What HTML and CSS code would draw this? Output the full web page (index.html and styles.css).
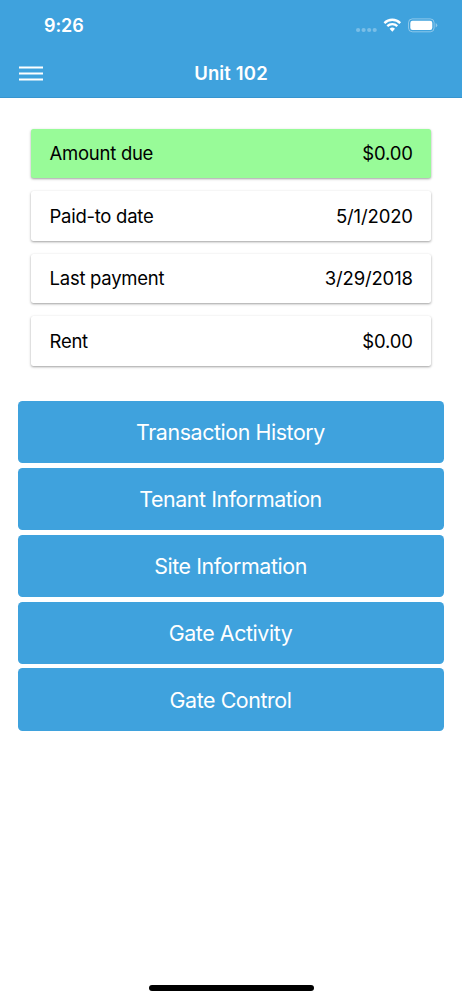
FILE: index.html
```html
<!DOCTYPE html>
<html lang="en">
<head>
<meta charset="utf-8">
<meta name="viewport" content="width=device-width, initial-scale=1">
<title>Unit 102</title>
<link rel="stylesheet" href="styles.css">
</head>
<body>
<div class="screen">
  <header class="header">
    <div class="status">
      <span class="time">9:26</span>
      <svg class="indicators" width="84" height="20" viewBox="0 0 84 20" fill="#fff" aria-hidden="true">
        <g opacity=".3"><circle cx="3.1" cy="15" r="2.1"/><circle cx="8.6" cy="15" r="2.1"/><circle cx="14.2" cy="15" r="2.1"/><circle cx="19.7" cy="15" r="2.1"/></g>
        <g fill="none" stroke="#fff" stroke-width="2.3"><path d="M29.4 8.1a11 11 0 0 1 15.8 0"/><path d="M32.3 11.1a7.1 7.1 0 0 1 10 0"/></g>
        <path d="M34.6 13.7a3.9 3.9 0 0 1 5.4 0L37.3 16.7Z"/>
        <rect x="53.5" y="3.9" width="25.6" height="12.9" rx="3.8" fill="none" stroke="#fff" opacity=".4"/>
        <rect x="55.3" y="5.7" width="22" height="9.3" rx="2.2"/>
        <path d="M80.7 8.1Q82.3 8.8 82.3 10.3T80.7 12.5Z" opacity=".4"/>
      </svg>
    </div>
    <div class="nav">
      <svg class="menu" width="24" height="16" viewBox="0 0 24 16" stroke="#fff" stroke-width="2" aria-label="Menu"><path d="M0 1.6H24M0 7.5H24M0 13.4H24"/></svg>
      <h1 class="title">Unit 102</h1>
    </div>
  </header>
  <main class="content">
    <section class="cards">
      <div class="card due"><span class="label">Amount due</span><span class="value">$0.00</span></div>
      <div class="card"><span class="label">Paid-to date</span><span class="value">5/1/2020</span></div>
      <div class="card"><span class="label">Last payment</span><span class="value">3/29/2018</span></div>
      <div class="card"><span class="label">Rent</span><span class="value">$0.00</span></div>
    </section>
    <nav class="actions">
      <button class="action">Transaction History</button>
      <button class="action">Tenant Information</button>
      <button class="action">Site Information</button>
      <button class="action">Gate Activity</button>
      <button class="action">Gate Control</button>
    </nav>
  </main>
  <div class="home"></div>
</div>
</body>
</html>
```
FILE: styles.css
```css
* { box-sizing: border-box; }
body { margin: 0; background: #fff; font-family: Inter, "Liberation Sans", sans-serif; }
.screen { display: flex; flex-direction: column; width: 462px; height: 1000px; overflow: hidden; }
.header { height: 98.3px; background: #3fa2dd; color: #fff; border-bottom: 1px solid #3795cf; }
.status { height: 50px; padding: 1px 23px 0 44px; display: flex; align-items: center; justify-content: space-between; }
.time { font-size: 18px; font-weight: 600; letter-spacing: -.1px; }
.indicators { display: block; margin-top: -2px; }
.nav { height: 47px; padding: 0 19px; display: grid; grid-template-columns: 24px 1fr 24px; align-items: center; }
.title { margin: 0 0 2px; text-align: center; font-size: 18.5px; font-weight: 600; line-height: 24px; letter-spacing: .15px; }
.content { flex: 1; padding: 30.3px 18px 0; }
.cards { display: flex; flex-direction: column; gap: 13px; padding: 0 13.2px 0 13.4px; }
.card { height: 49.5px; padding: 0 18px 0 18.2px; display: flex; align-items: center; justify-content: space-between; border-radius: 2.5px; background: #fff; color: #000; font-size: 18.5px; box-shadow: 0 1px 2.5px rgba(0, 0, 0, .38); }
.label { letter-spacing: -.27px; }
.value { letter-spacing: -.15px; }
.due { background: #98fb98; }
.actions { display: flex; flex-direction: column; gap: 4.5px; margin-top: 35.3px; }
.action { height: 62.4px; padding: 0 1px 0 0; border: 0; border-radius: 4.5px; background: #3fa2dd; color: #fff; font: 400 21.4px Inter, "Liberation Sans", sans-serif; letter-spacing: -.42px; }
.home { align-self: center; width: 165px; height: 6px; margin-bottom: 9px; border-radius: 3px; background: #000; }
```
